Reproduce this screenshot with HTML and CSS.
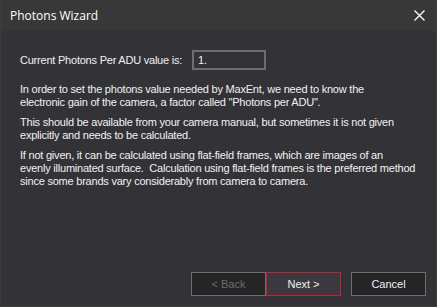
FILE: index.html
```html
<!DOCTYPE html>
<html lang="en">
  <head>
    <meta charset="UTF-8" />
    <title>Photons Wizard</title>
    <link rel="stylesheet" href="styles.css">
  </head>
  <body>
    <div class="window">
      <div class="titlebar">
        <div class="title">Photons Wizard</div>
        <svg class="close" width="11" height="11" viewBox="0 0 11 11">
          <path d="M0.5 0.5 L10.5 10.5 M10.5 0.5 L0.5 10.5" stroke="#ffffff" stroke-width="1.3" fill="none" />
        </svg>
      </div>

      <div class="content">
        <div class="value__row">
          <span>Current Photons Per ADU value is:</span>
          <div class="value__box">1.</div>
        </div>

        <p>In order to set the photons value needed by MaxEnt, we need to know the<br>electronic gain of the camera, a factor called "Photons per ADU".</p>
        <p>This should be available from your camera manual, but sometimes it is not given<br>explicitly and needs to be calculated.</p>
        <p>If not given, it can be calculated using flat-field frames, which are images of an<br>evenly illuminated surface.&nbsp; Calculation using flat-field frames is the preferred method<br>since some brands vary considerably from camera to camera.</p>
      </div>

      <div class="buttons">
        <div class="btn btn--disabled">&lt; Back</div>
        <div class="btn btn--active">Next &gt;</div>
        <div class="btn btn--cancel">Cancel</div>
      </div>
    </div>
  </body>
</html>
```

FILE: styles.css
```css
* {
  padding: 0;
  margin: 0;
  box-sizing: border-box;
}

body {
  background: #333337;
  font-family: "Liberation Sans", Arial, sans-serif;
  font-size: 11px;
  letter-spacing: -0.22px;
  color: #f1f1f1;
}

.window {
  width: 437px;
  height: 307px;
  display: flex;
  flex-direction: column;
  border-left: 1px solid #3d3d40;
  border-right: 1px solid #3d3d40;
  border-bottom: 1px solid #3d3d40;
}

.titlebar {
  height: 31px;
  display: flex;
  align-items: center;
  justify-content: space-between;
  padding: 0 11px 0 9px;
  background: #383838;
}

.title {
  font-family: "Open Sans", "Noto Sans", sans-serif;
  font-size: 12px;
  letter-spacing: 0;
  color: #ffffff;
}

.content {
  flex: 1;
  padding: 19px 0 0 19px;
}

.value__row {
  display: flex;
  align-items: center;
  gap: 10px;
  margin-bottom: 13px;
}

.value__box {
  width: 74px;
  height: 20px;
  border: 2px solid #6e6e70;
  padding: 2px 4px;
  line-height: 13px;
}

.content p {
  white-space: nowrap;
  line-height: 13px;
  margin-bottom: 7px;
}

.buttons {
  display: flex;
  justify-content: flex-end;
  padding: 0 10px 10px 0;
}

.btn {
  width: 75px;
  height: 24px;
  display: flex;
  align-items: center;
  justify-content: center;
  border: 1px solid #6e6e70;
  background: #252526;
  color: #f1f1f1;
  letter-spacing: 0;
}

.btn--disabled {
  color: #6d6d6d;
}

.btn--active {
  border-color: #c4203a;
  background: #3a3a3e;
}

.btn--cancel {
  margin-left: 10px;
}
```
